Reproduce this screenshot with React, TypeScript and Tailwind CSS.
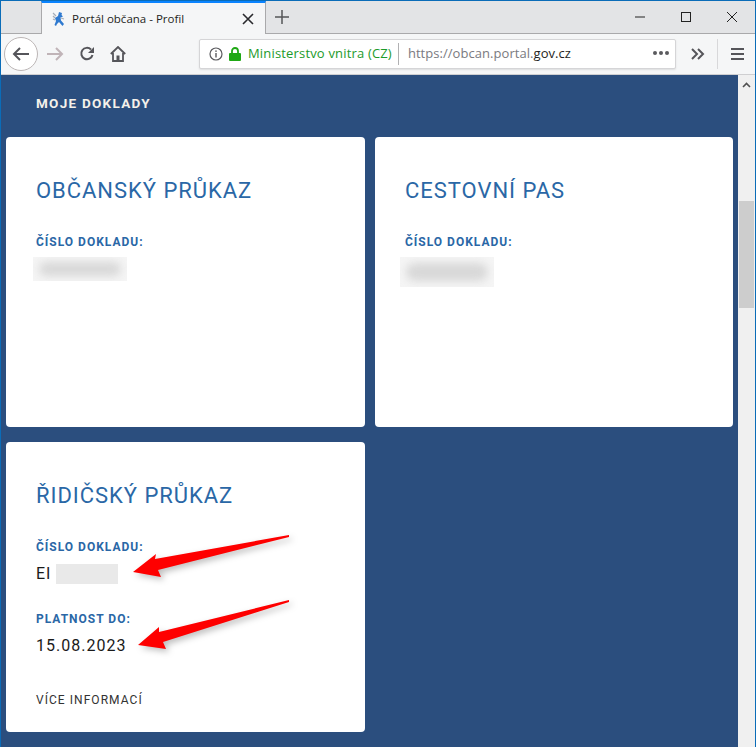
const roboto = { fontFamily: "Roboto, sans-serif" };

function Label({ children }: { children: React.ReactNode }) {
  return <div className="text-[12px] leading-[14px] font-bold tracking-[1px] text-[#2a67a6]">{children}</div>;
}

function Blur({ className }: { className: string }) {
  return (
    <div className={`bg-[#f5f5f5] flex items-center justify-center overflow-hidden ${className}`}>
      <div className="w-[88%] h-[60%] rounded-full bg-[#d8d8d8] blur-[4px]" />
    </div>
  );
}

function Card({ title, children }: { title: string; children?: React.ReactNode }) {
  return (
    <div className="bg-white rounded-[4px] h-[290px] pl-[30px] pt-[40px] flex flex-col">
      <div className="text-[22px] leading-[28px] tracking-[0.96px] text-[#2a67a6]">{title}</div>
      <div className="mt-[30px]"><Label>ČÍSLO DOKLADU:</Label></div>
      {children}
    </div>
  );
}

export default function App() {
  return (
    <div style={roboto} className="relative w-[756px] h-[747px] overflow-hidden border border-[#0a6cb8] border-b-0 flex flex-col bg-[#2b4e7e]">
      {/* title bar */}
      <div className="h-[33px] bg-[#e3e4e6] flex items-stretch border-b border-[#a9a9ab] shrink-0" style={{ fontFamily: "'Open Sans', sans-serif" }}>
        <div className="w-[40px]" />
        <div className="w-[225px] h-[33px] bg-[#f5f6f7] border-x border-[#a9a9ab] border-t-2 border-t-[#0a84ff] flex items-center pl-[10px] relative">
          <svg width="14" height="16" viewBox="0 0 14 16" className="mr-[6px]">
            <path d="M1 2 L4 5 M1 5 L3 7 M1 8 L3 9 M9 7 L12 8" stroke="#a5adb8" strokeWidth="1.2" />
            <path d="M7 1 L10 2 L9.5 4 L11 5.5 L8.5 6.5 L9 9.5 L12 13 L10.5 15 L7 11 L5 13 L4 15 L2.5 14 L4 10 L3 7 L6 5 Z" fill="#2f7ad0" />
          </svg>
          <span className="text-[11.5px] text-[#1f1f22] whitespace-nowrap">Portál občana - Profil</span>
          <svg width="12" height="12" viewBox="0 0 12 12" className="absolute left-[200px] top-[10px]">
            <path d="M1 1 L11 11 M11 1 L1 11" stroke="#2a2a2e" strokeWidth="1.6" />
          </svg>
        </div>
        <div className="w-[32px] flex items-center justify-center">
          <svg width="14" height="14" viewBox="0 0 14 14"><path d="M7 0 V14 M0 7 H14" stroke="#555558" strokeWidth="1.5" /></svg>
        </div>
        <div className="flex-1" />
        <div className="flex items-center">
          <svg width="12" height="12" viewBox="0 0 12 12" className="mr-[34px]"><path d="M1 6 H11" stroke="#222" strokeWidth="1" /></svg>
          <svg width="12" height="12" viewBox="0 0 12 12" className="mr-[34px]"><rect x="1.5" y="1.5" width="9" height="9" fill="none" stroke="#222" /></svg>
          <svg width="12" height="12" viewBox="0 0 12 12" className="mr-[17px]"><path d="M1 1 L11 11 M11 1 L1 11" stroke="#222" strokeWidth="1" /></svg>
        </div>
      </div>
      {/* tool bar */}
      <div className="h-[41px] bg-[#f5f6f7] border-b border-[#cfcfd1] flex items-center shrink-0" style={{ fontFamily: "'Open Sans', sans-serif" }}>
        <div className="ml-[3px] w-[34px] h-[34px] rounded-full bg-white border border-[#bcb6b6] flex items-center justify-center">
          <svg width="18" height="16" viewBox="0 0 18 16"><path d="M17 8 H2 M8 2 L2 8 L8 14" fill="none" stroke="#55555a" strokeWidth="2" /></svg>
        </div>
        <svg width="18" height="16" viewBox="0 0 18 16" className="ml-[8px]"><path d="M1 8 H16 M10 2 L16 8 L10 14" fill="none" stroke="#c0b4b8" strokeWidth="2" /></svg>
        <svg width="16" height="16" viewBox="0 0 16 16" className="ml-[15px]"><path d="M13.5 9 A5.7 5.7 0 1 1 12 3.5" fill="none" stroke="#55555a" strokeWidth="2" /><path d="M15 1 V7 H9 Z" fill="#55555a" /></svg>
        <svg width="16" height="16" viewBox="0 0 16 16" className="ml-[15px]"><path d="M0.8 8 L8 1 L15.2 8 M3 7 V15 H13 V7" fill="none" stroke="#55555a" strokeWidth="1.8" /><rect x="6.5" y="9.5" width="3" height="5.5" fill="#55555a" /></svg>
        <div className="ml-[73px] w-[477px] h-[30px] bg-white border border-[#d5d5d7] rounded-[2px] flex items-center relative shadow-[0_1px_2px_rgba(0,0,0,0.1)]">
          <svg width="14" height="14" viewBox="0 0 14 14" className="ml-[9px]"><circle cx="7" cy="7" r="6" fill="none" stroke="#5a5a5e" strokeWidth="1.2" /><rect x="6.3" y="6" width="1.4" height="4.5" fill="#5a5a5e" /><rect x="6.3" y="3.4" width="1.4" height="1.5" fill="#5a5a5e" /></svg>
          <svg width="12" height="14" viewBox="0 0 12 14" className="ml-[6px]"><rect x="0" y="6" width="12" height="8" rx="1" fill="#1fa815" /><path d="M3 6.5 V4 A3 3 0 0 1 9 4 V6.5" fill="none" stroke="#1fa815" strokeWidth="1.8" /></svg>
          <span className="ml-[7px] text-[13px] tracking-[0.17px] text-[#1c9a2a] whitespace-nowrap">Ministerstvo vnitra (CZ)</span>
          <div className="ml-[6px] w-px h-[22px] bg-[#b1b1b3]" />
          <span className="ml-[9px] text-[13px] tracking-[0.05px] text-[#7a7a80] whitespace-nowrap">https://obcan.portal.<span className="text-[#1f1f22]">gov.cz</span></span>
          <span className="absolute right-[6px] top-[11px] flex gap-[2px]">
            <i className="w-[4px] h-[4px] rounded-full bg-[#5a5a5e]" />
            <i className="w-[4px] h-[4px] rounded-full bg-[#5a5a5e]" />
            <i className="w-[4px] h-[4px] rounded-full bg-[#5a5a5e]" />
          </span>
        </div>
        <svg width="14" height="12" viewBox="0 0 14 12" className="ml-[15px]"><path d="M1 1 L6 6 L1 11 M7 1 L12 6 L7 11" fill="none" stroke="#55555a" strokeWidth="2" /></svg>
        <div className="ml-[12px] w-px h-[30px] bg-[#d8d8da]" />
        <svg width="14" height="12" viewBox="0 0 14 12" className="ml-[13px]"><path d="M0 1 H13 M0 6 H13 M0 11 H13" stroke="#55555a" strokeWidth="2" /></svg>
      </div>
      {/* page */}
      <div className="flex-1 flex min-h-0">
        <div className="flex-1 pl-[5px] pr-[4px] min-w-0">
          <div className="pl-[30px] pt-[21px] h-[62px] text-[13.5px] leading-[14px] font-bold tracking-[1.27px] text-[#f4f1ea]">MOJE DOKLADY</div>
          <div className="grid grid-cols-[359px_358px] gap-x-[10px] gap-y-[15px]">
            <Card title="OBČANSKÝ PRŮKAZ">
              <Blur className="w-[94px] h-[24px] -ml-[3px] mt-[8px]" />
            </Card>
            <Card title="CESTOVNÍ PAS">
              <Blur className="w-[94px] h-[30px] -ml-[5px] mt-[8px]" />
            </Card>
            <Card title="ŘIDIČSKÝ PRŮKAZ">
              <div className="flex items-center mt-[10px] h-[20px] text-[16px] tracking-[1px] text-[#1a1a1a]">
                EI
                <div className="ml-[5px] w-[62px] h-[20px] bg-[#e9e9e9]" />
              </div>
              <div className="mt-[28px]"><Label>PLATNOST DO:</Label></div>
              <div className="mt-[10px] text-[16px] leading-[20px] tracking-[1px] text-[#1a1a1a]">15.08.2023</div>
              <div className="mt-[37px] text-[12px] leading-[14px] tracking-[1.05px] text-[#333333]">VÍCE INFORMACÍ</div>
            </Card>
          </div>
        </div>
        <div className="w-[17px] bg-[#f0f0f0] shrink-0 flex flex-col items-center">
          <svg width="9" height="6" viewBox="0 0 9 6" className="mt-[7px]"><path d="M1 5 L4.5 1.5 L8 5" fill="none" stroke="#505050" strokeWidth="1.6" /></svg>
          <div className="mt-[113px] w-[15px] h-[107px] bg-[#cdcdcd]" />
        </div>
      </div>
      {/* annotation arrows */}
      <svg width="756" height="747" className="absolute left-[-1px] top-[-1px] pointer-events-none" style={{ filter: "drop-shadow(3px 3px 3px rgba(0,0,0,0.25))" }}>
        <path d="M289 535 L155 559 L156 554 L133 572 L161 577 L158 570 L289 537 Z" fill="#fe0000" />
        <path d="M289 600 L159 632 L159 627 L138 645 L166 649 L163 642 L289 602 Z" fill="#fe0000" />
      </svg>
    </div>
  );
}
